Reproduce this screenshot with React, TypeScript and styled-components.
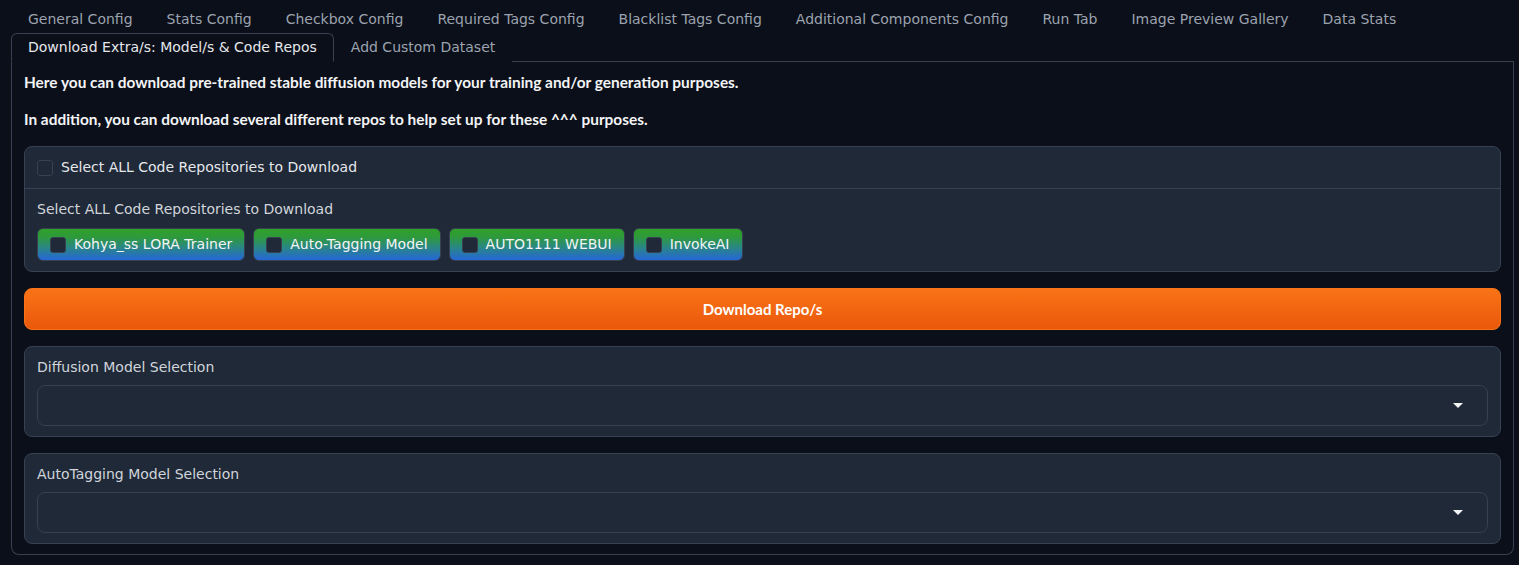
import React from "react";
import styled, { createGlobalStyle } from "styled-components";

const GlobalStyle = createGlobalStyle`
  html, body { margin: 0; padding: 0; background: #0b0f19; }
  body { font-family: "DejaVu Sans", sans-serif; color: #e5e7eb; }
  * { box-sizing: border-box; }
`;

const Page = styled.div`
  padding: 5px 5px 10px 11px;
`;

const TabNav = styled.div`
  display: flex;
  flex-wrap: wrap;
  border-bottom: 1px solid #374151;
`;

const TabButton = styled.button<{ $active?: boolean }>`
  font-family: "DejaVu Sans", sans-serif;
  font-size: 14px;
  line-height: 21px;
  padding: 3px 16px;
  margin-bottom: -1px;
  background: #0b0f19;
  color: ${(p) => (p.$active ? "#e5e7eb" : "#9ca3af")};
  border: 1px solid ${(p) => (p.$active ? "#374151" : "transparent")};
  border-bottom: ${(p) => (p.$active ? "1px solid #0b0f19" : "1px solid transparent")};
  border-radius: 6px 6px 0 0;
  cursor: pointer;
`;

const Panel = styled.div`
  border: 1px solid #374151;
  border-top: none;
  border-radius: 0 0 8px 8px;
  padding: 10px 12px 10px 12px;
  display: flex;
  flex-direction: column;
  gap: 16px;
`;

const Prose = styled.p`
  margin: 0;
  font-family: "Lato", sans-serif;
  font-weight: 700;
  font-size: 15.4px;
  line-height: 21px;
  color: #f3f4f6;
`;

const Block = styled.div`
  background: #1f2937;
  border: 1px solid #374151;
  border-radius: 8px;
  overflow: hidden;
`;

const BlockSection = styled.div<{ $divider?: boolean }>`
  padding: 10px 12px;
  border-top: ${(p) => (p.$divider ? "1px solid #374151" : "none")};
`;

const CheckRow = styled.label`
  display: flex;
  align-items: center;
  gap: 8px;
  font-size: 14px;
  line-height: 21px;
  color: #e5e7eb;
`;

const Box = styled.span`
  width: 16px;
  height: 16px;
  border-radius: 3px;
  background: #1f2937;
  border: 1px solid #374151;
  flex: none;
`;

const Label = styled.div`
  font-size: 14px;
  line-height: 21px;
  color: #d1d5db;
  margin-bottom: 8px;
`;

const ChipRow = styled.div`
  display: flex;
  flex-wrap: wrap;
  gap: 8px;
`;

const Chip = styled.label`
  display: flex;
  align-items: center;
  gap: 8px;
  padding: 5px 12px;
  border: 1px solid #374151;
  border-radius: 6px;
  background: linear-gradient(180deg, #2fa12a 0%, #2e9a3a 25%, #2a8a7a 55%, #2566d9 100%);
  font-size: 14px;
  line-height: 21px;
  color: #f3f4f6;
`;

const PrimaryButton = styled.button`
  width: 100%;
  height: 42px;
  border: 1px solid #f97316;
  border-radius: 8px;
  background: linear-gradient(180deg, #f97316 0%, #ea580c 100%);
  color: #ffffff;
  font-family: "Lato", sans-serif;
  font-weight: 700;
  font-size: 15px;
  cursor: pointer;
`;

const SelectInput = styled.div`
  height: 41px;
  border: 1px solid #374151;
  border-radius: 8px;
  background: #1f2937;
  display: flex;
  align-items: center;
  justify-content: flex-end;
  padding-right: 24px;
`;

const DropLabel = styled(Label)`
  margin-bottom: 7px;
`;

const Caret = () => (
  <svg width="10" height="6" viewBox="0 0 10 6">
    <path d="M0 0 L10 0 L5 5 Z" fill="#f3f4f6" />
  </svg>
);

const row1 = [
  "General Config",
  "Stats Config",
  "Checkbox Config",
  "Required Tags Config",
  "Blacklist Tags Config",
  "Additional Components Config",
  "Run Tab",
  "Image Preview Gallery",
  "Data Stats",
];

const chips = ["Kohya_ss LORA Trainer", "Auto-Tagging Model", "AUTO1111 WEBUI", "InvokeAI"];

export default function App() {
  return (
    <>
      <GlobalStyle />
      <Page>
        <TabNav>
          {row1.map((t) => (
            <TabButton key={t}>{t}</TabButton>
          ))}
          <TabButton $active>Download Extra/s: Model/s &amp; Code Repos</TabButton>
          <TabButton>Add Custom Dataset</TabButton>
        </TabNav>
        <Panel>
          <Prose>Here you can download pre-trained stable diffusion models for your training and/or generation purposes.</Prose>
          <Prose>In addition, you can download several different repos to help set up for these ^^^ purposes.</Prose>
          <Block>
            <BlockSection>
              <CheckRow>
                <Box />
                Select ALL Code Repositories to Download
              </CheckRow>
            </BlockSection>
            <BlockSection $divider>
              <Label>Select ALL Code Repositories to Download</Label>
              <ChipRow>
                {chips.map((c) => (
                  <Chip key={c}>
                    <Box />
                    {c}
                  </Chip>
                ))}
              </ChipRow>
            </BlockSection>
          </Block>
          <PrimaryButton>Download Repo/s</PrimaryButton>
          <Block>
            <BlockSection>
              <DropLabel>Diffusion Model Selection</DropLabel>
              <SelectInput>
                <Caret />
              </SelectInput>
            </BlockSection>
          </Block>
          <Block>
            <BlockSection>
              <DropLabel>AutoTagging Model Selection</DropLabel>
              <SelectInput>
                <Caret />
              </SelectInput>
            </BlockSection>
          </Block>
        </Panel>
      </Page>
    </>
  );
}
